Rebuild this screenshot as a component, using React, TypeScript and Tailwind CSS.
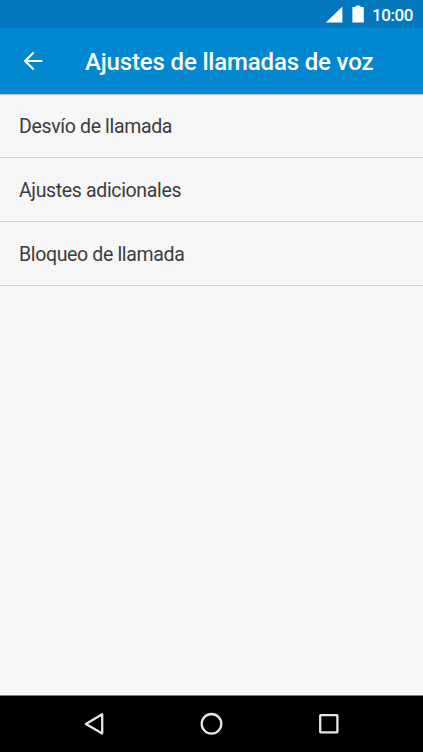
const ITEMS = ["Desvío de llamada", "Ajustes adicionales", "Bloqueo de llamada"];

function StatusBar() {
  return (
    <div className="flex h-7 flex-none items-center bg-[#0277bd] pl-[325px] text-white">
      <svg width="18" height="28" viewBox="0 0 18 28" fill="currentColor" className="flex-none">
        <path d="M17.4 6.4v16.1H.8z" />
      </svg>
      <svg width="12" height="28" viewBox="0 0 12 28" fill="currentColor" className="ml-[9px] flex-none">
        <path d="M3.6 5.4h4.800v1.600h3.400v15.500H.4V7h3.200z" />
      </svg>
      <span className="ml-2 pt-[2px] text-[17px] leading-7 font-medium tracking-[-0.4px] whitespace-nowrap">10:00</span>
    </div>
  );
}

function Header({ title }: { title: string }) {
  return (
    <header className="z-10 flex h-[66px] flex-none items-center bg-[#0288d1] pl-[23px] text-white shadow-[0_1px_1px_rgba(0,0,0,0.22)]">
      <button aria-label="Atrás" className="flex-none">
        <svg width="20" height="20" viewBox="0 0 20 20" fill="none" stroke="currentColor" strokeWidth="2.1">
          <path d="M19.400 10H2.300M10.700 1.400L2.100 10l8.600 8.600" />
        </svg>
      </button>
      <h1 className="ml-[42px] pt-[2px] text-[24px] leading-8 font-medium tracking-[-0.16px] whitespace-nowrap">{title}</h1>
    </header>
  );
}

function NavBar() {
  return (
    <nav className="flex h-[57px] flex-none items-center justify-between border-t border-[#777b7b] bg-black px-[82px] text-[#e6e6e6]">
      <button aria-label="Volver">
        <svg width="24" height="24" viewBox="0 0 24 24" fill="none" stroke="currentColor" strokeWidth="2.3" strokeLinejoin="round">
          <path d="M20.200 2.300v19.200L3.900 11.900z" />
        </svg>
      </button>
      <button aria-label="Inicio">
        <svg width="24" height="24" viewBox="0 0 24 24" fill="none" stroke="currentColor" strokeWidth="2.3">
          <circle cx="11.500" cy="11.800" r="9.800" />
        </svg>
      </button>
      <button aria-label="Recientes">
        <svg width="24" height="24" viewBox="0 0 24 24" fill="none" stroke="currentColor" strokeWidth="2.3">
          <rect x="3.200" y="3.200" width="17.200" height="17.200" rx="0.600" />
        </svg>
      </button>
    </nav>
  );
}

export default function App() {
  return (
    <div className="flex h-screen w-full flex-col overflow-hidden bg-[#f6f6f6] font-['Roboto',sans-serif]">
      <StatusBar />
      <Header title="Ajustes de llamadas de voz" />
      <ul className="flex-1">
        {ITEMS.map((item) => (
          <li
            key={item}
            className="flex h-16 items-center border-b border-[#d2d2d2] pt-0.5 pl-[19px] text-[19.5px] tracking-[-0.35px] text-[#3c3c3c]"
          >
            {item}
          </li>
        ))}
      </ul>
      <NavBar />
    </div>
  );
}
